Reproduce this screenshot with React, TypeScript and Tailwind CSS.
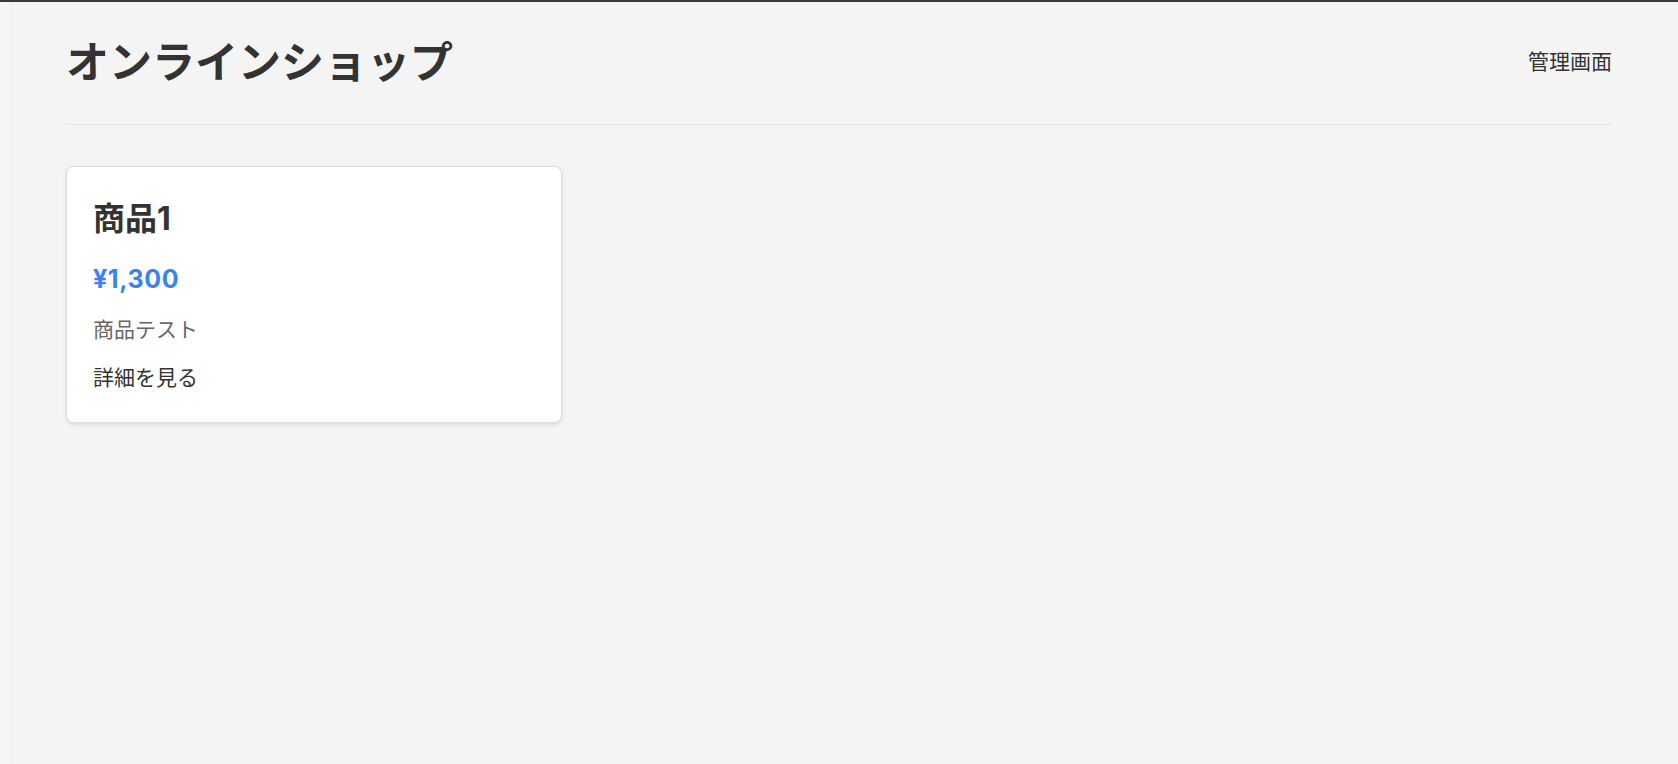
const PRODUCTS = [{ id: 1, name: '商品1', price: 1300, description: '商品テスト' }];

export default function App() {
  return (
    <div
      className="min-h-screen flex bg-[#f4f4f4] border-t-2 border-[#3a3a3a] text-[#333]"
      style={{ fontFamily: 'Inter, "Noto Sans CJK JP", sans-serif' }}
    >
      <div className="w-[12px] shrink-0 bg-[#f6f6f6] border-r border-[#efefef]" />
      <main className="flex-1 pl-[54px] pr-[66px]">
        <header className="flex items-center justify-between pt-[34px] pb-[36px] border-b border-[#e6e6e6]">
          <h1 className="text-[43px] leading-[52px] font-bold text-[#333]">オンラインショップ</h1>
          <a href="#" className="text-[21px] leading-[30px] text-[#333]">管理画面</a>
        </header>

        <div className="grid grid-cols-3 gap-[29px] mt-[41px]">
          {PRODUCTS.map((p) => (
            <div
              key={p.id}
              className="bg-white border border-[#dddddd] rounded-lg shadow-[0_2px_4px_rgba(0,0,0,0.1)] px-[26px] pt-[34px] pb-[29px]"
            >
              <h2 className="text-[32px] leading-[36px] font-bold text-[#333]">{p.name}</h2>
              <p className="mt-[26px] text-[25px] leading-[32px] font-bold tracking-[0.6px] text-[#3b82f6]">
                ¥{p.price.toLocaleString()}
              </p>
              <p className="mt-[20px] text-[21px] leading-[30px] text-[#666]">{p.description}</p>
              <a href="#" className="block mt-[18px] text-[21px] leading-[30px] text-[#333]">詳細を見る</a>
            </div>
          ))}
        </div>
      </main>
    </div>
  );
}
